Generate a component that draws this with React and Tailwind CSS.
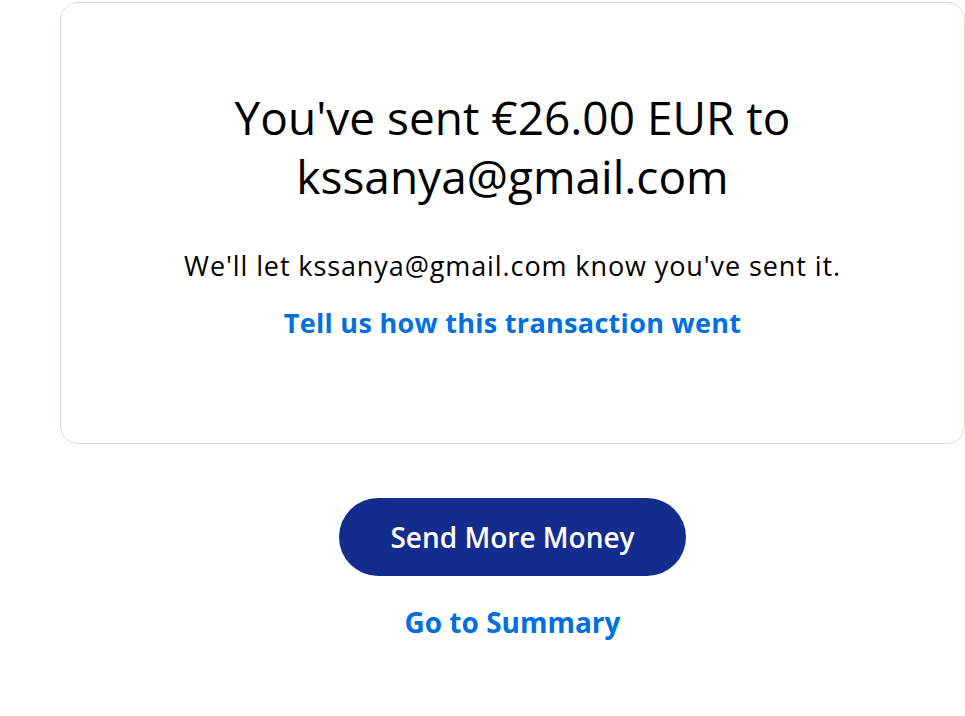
import React from "react";

export default function App() {
  return (
    <div
      className="min-h-[716px] w-[965px] bg-white overflow-hidden"
      style={{ fontFamily: '"Open Sans", "Liberation Sans", sans-serif' }}
    >
      <div className="ml-[60px] mt-[2px] w-[905px]">
        <div className="h-[442px] rounded-[18px] border border-[#dcdad0] flex flex-col items-center pt-[85px]">
          <h1 className="text-[46px] leading-[59px] font-normal text-[#000] text-center">
            You've sent €26.00 EUR to
            <br />
            kssanya@gmail.com
          </h1>
          <p className="mt-[44px] text-[27px] leading-[32px] tracking-[0.9px] text-[#000]">
            We'll let kssanya@gmail.com know you've sent it.
          </p>
          <a className="mt-[25px] text-[27px] leading-[32px] tracking-[0.3px] font-bold text-[#0070e0]">
            Tell us how this transaction went
          </a>
        </div>
        <div className="flex flex-col items-center mt-[54px]">
          <button className="w-[347px] h-[78px] rounded-full bg-[#142c8e] text-white text-[28px] font-semibold">
            Send More Money
          </button>
          <a className="mt-[29px] text-[28px] leading-[34px] font-bold text-[#0070e0]">
            Go to Summary
          </a>
        </div>
      </div>
    </div>
  );
}
